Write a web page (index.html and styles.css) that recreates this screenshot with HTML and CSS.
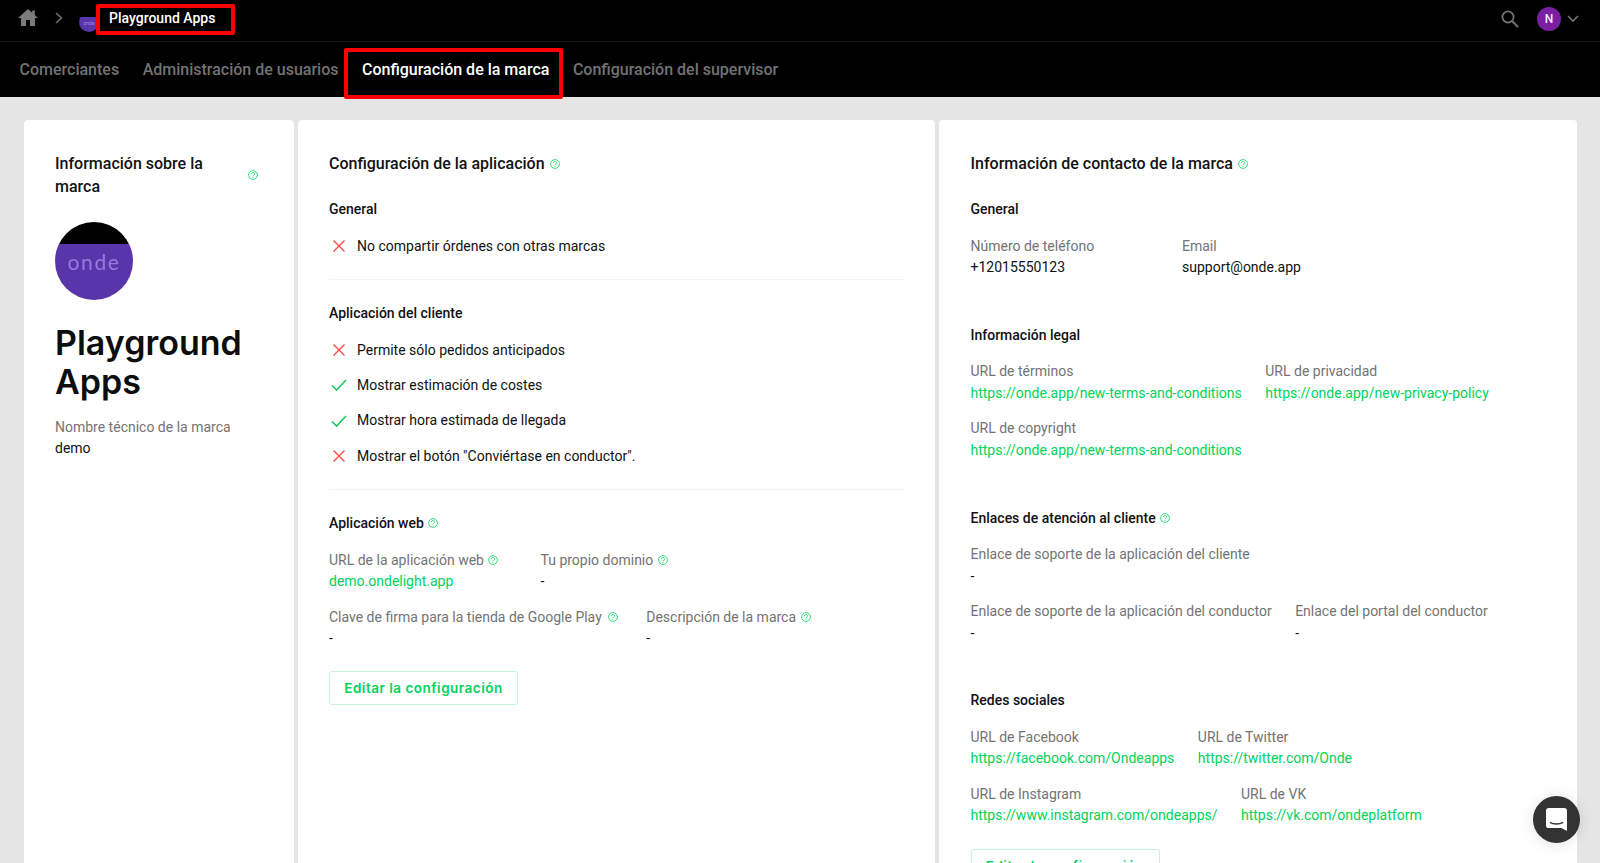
FILE: index.html
```html
<!DOCTYPE html>
<html lang="es">
<head>
<meta charset="utf-8">
<title>Configuración de la marca</title>
<link rel="stylesheet" href="styles.css">
</head>
<body>
<svg class="sprite" width="0" height="0" aria-hidden="true">
  <symbol id="help" viewBox="0 0 10 10"><circle cx="5" cy="5" r="4.4" fill="none" stroke="currentColor" stroke-width=".9"/><path d="M3.5 4a1.5 1.5 0 1 1 2.3 1.2c-.5.35-.8.55-.8 1.05" fill="none" stroke="currentColor" stroke-width=".9"/><circle cx="5" cy="7.5" r=".5" fill="currentColor"/></symbol>
  <symbol id="no" viewBox="0 0 14 14"><path d="M1.5 1.5l11 11M12.5 1.5l-11 11" fill="none" stroke="currentColor" stroke-width="1.3"/></symbol>
  <symbol id="yes" viewBox="0 0 16 14"><path d="M1 7.5l4.6 4.6L15 2" fill="none" stroke="currentColor" stroke-width="1.5"/></symbol>
</svg>
<header class="topbar">
  <div class="crumbs">
    <svg class="home" viewBox="0 0 20 17"><path d="M10 0L0 9h3v8h5v-6h4v6h5V9h3l-3.2-2.9V1.5h-2.6v2.2z" fill="currentColor"/></svg>
    <svg class="crumb-sep" viewBox="0 0 8 12"><path d="M1 1l5.5 5L1 11" fill="none" stroke="currentColor" stroke-width="1.5"/></svg>
    <div class="mini-logo"><span>onde</span></div>
    <span class="brand marked marked-brand">Playground Apps</span>
    <div class="top-actions">
      <svg class="search" viewBox="0 0 18 18"><circle cx="7" cy="7" r="5.6" fill="none" stroke="currentColor" stroke-width="1.8"/><path d="M11 11l6 6" stroke="currentColor" stroke-width="2"/></svg>
      <div class="avatar">N</div>
      <svg class="caret" viewBox="0 0 12 8"><path d="M1 1l5 5 5-5" fill="none" stroke="currentColor" stroke-width="1.6"/></svg>
    </div>
  </div>
  <nav class="tabs">
    <span>Comerciantes</span>
    <span>Administración de usuarios</span>
    <span class="active marked marked-tab">Configuración de la marca</span>
    <span>Configuración del supervisor</span>
  </nav>
</header>
<main class="cards">
  <section class="card">
    <div class="brand-heading">
      <h2>Información sobre la marca</h2>
      <svg class="help"><use href="#help"/></svg>
    </div>
    <div class="logo"><span>onde</span></div>
    <h1>Playground Apps</h1>
    <div class="label">Nombre técnico de la marca</div>
    <div class="value">demo</div>
  </section>

  <section class="card">
    <h2>Configuración de la aplicación <svg class="help"><use href="#help"/></svg></h2>
    <h3 class="first">General</h3>
    <ul class="checks">
      <li><svg class="mark no"><use href="#no"/></svg>No compartir órdenes con otras marcas</li>
    </ul>
    <hr>
    <h3>Aplicación del cliente</h3>
    <ul class="checks">
      <li><svg class="mark no"><use href="#no"/></svg>Permite sólo pedidos anticipados</li>
      <li><svg class="mark yes"><use href="#yes"/></svg>Mostrar estimación de costes</li>
      <li><svg class="mark yes"><use href="#yes"/></svg>Mostrar hora estimada de llegada</li>
      <li><svg class="mark no"><use href="#no"/></svg>Mostrar el botón "Conviértase en conductor".</li>
    </ul>
    <hr>
    <h3>Aplicación web <svg class="help"><use href="#help"/></svg></h3>
    <div class="fields">
      <div class="row">
        <div class="field"><div class="label">URL de la aplicación web <svg class="help"><use href="#help"/></svg></div><div class="value link">demo.ondelight.app</div></div>
        <div class="field"><div class="label">Tu propio dominio <svg class="help"><use href="#help"/></svg></div><div class="value">-</div></div>
      </div>
      <div class="row">
        <div class="field field-wide"><div class="label">Clave de firma para la tienda de Google Play <svg class="help"><use href="#help"/></svg></div><div class="value">-</div></div>
        <div class="field"><div class="label">Descripción de la marca <svg class="help"><use href="#help"/></svg></div><div class="value">-</div></div>
      </div>
    </div>
    <button class="edit">Editar la configuración</button>
  </section>

  <section class="card card-contact">
    <h2>Información de contacto de la marca <svg class="help"><use href="#help"/></svg></h2>
    <h3 class="first">General</h3>
    <div class="fields">
      <div class="row">
        <div class="field"><div class="label">Número de teléfono</div><div class="value">+12015550123</div></div>
        <div class="field"><div class="label">Email</div><div class="value">support@onde.app</div></div>
      </div>
    </div>
    <h3 class="group">Información legal</h3>
    <div class="fields">
      <div class="row">
        <div class="field"><div class="label">URL de términos</div><div class="value link">https://onde.app/new-terms-and-conditions</div></div>
        <div class="field"><div class="label">URL de privacidad</div><div class="value link">https://onde.app/new-privacy-policy</div></div>
      </div>
      <div class="row">
        <div class="field"><div class="label">URL de copyright</div><div class="value link">https://onde.app/new-terms-and-conditions</div></div>
      </div>
    </div>
    <h3 class="group">Enlaces de atención al cliente <svg class="help"><use href="#help"/></svg></h3>
    <div class="fields">
      <div class="row">
        <div class="field"><div class="label">Enlace de soporte de la aplicación del cliente</div><div class="value">-</div></div>
      </div>
      <div class="row">
        <div class="field"><div class="label">Enlace de soporte de la aplicación del conductor</div><div class="value">-</div></div>
        <div class="field"><div class="label">Enlace del portal del conductor</div><div class="value">-</div></div>
      </div>
    </div>
    <h3 class="group">Redes sociales</h3>
    <div class="fields">
      <div class="row">
        <div class="field"><div class="label">URL de Facebook</div><div class="value link">https://facebook.com/Ondeapps</div></div>
        <div class="field"><div class="label">URL de Twitter</div><div class="value link">https://twitter.com/Onde</div></div>
      </div>
      <div class="row">
        <div class="field"><div class="label">URL de Instagram</div><div class="value link">https://www.instagram.com/ondeapps/</div></div>
        <div class="field"><div class="label">URL de VK</div><div class="value link">https://vk.com/ondeplatform</div></div>
      </div>
    </div>
    <button class="edit">Editar la configuración</button>
  </section>
</main>
<button class="chat" aria-label="Chat">
  <svg viewBox="0 0 22 24"><path d="M3 0h16a3 3 0 0 1 3 3v21l-6-3H3a3 3 0 0 1-3-3V3a3 3 0 0 1 3-3z" fill="#fff"/><path d="M4 15c4 2.4 10 2.4 14 0" fill="none" stroke="#333" stroke-width="1.5"/></svg>
</button>
</body>
</html>
```

FILE: styles.css
```css
*, *::before, *::after { box-sizing: border-box; }
html, body { margin: 0; height: 863px; overflow: hidden; }
body { background: #e5e5e5; font-family: Roboto, "Liberation Sans", sans-serif; color: #111; font-size: 14px; }
.sprite { position: absolute; }

.topbar { background: #000; height: 97px; color: #737373; }
.crumbs { height: 42px; border-bottom: 1px solid #1a1a1a; display: flex; align-items: center; padding: 0 0 6px 18px; }
.home { width: 20px; height: 17px; color: #7b7b7b; margin-right: 17px; }
.crumb-sep { width: 8px; height: 12px; margin-right: 16px; color: #6f6f6f; }
.mini-logo { width: 20px; height: 20px; border-radius: 50%; background: linear-gradient(#000 25%, #5835a8 25%); overflow: hidden; margin: 8px 10px 0 0; display: flex; align-items: center; justify-content: center; padding-top: 2px; }
.mini-logo span { font: 5px/6px Lato, sans-serif; color: #a58bea; }
.brand { color: #fff; font-weight: 500; font-size: 14px; line-height: 20px; margin-top: 1px; }
.top-actions { margin-left: auto; display: flex; align-items: center; padding: 3px 21px 0 0; }
.search { width: 18px; height: 18px; margin-right: 18px; color: #737373; }
.avatar { width: 24px; height: 24px; border-radius: 50%; background: #7b1fa2; color: #eee; font-size: 12px; font-weight: 500; display: flex; align-items: center; justify-content: center; margin-right: 6px; }
.caret { width: 12px; height: 8px; color: #737373; }

.tabs { display: flex; gap: 23.5px; padding: 17px 0 0 19.5px; font-size: 16px; font-weight: 500; line-height: 22px; }
.active { color: #fff; }
.marked { position: relative; }
.marked::after { content: ""; position: absolute; border: 4px solid #f00; border-radius: 2px; pointer-events: none; }
.marked-brand::after { left: -13px; top: -4px; width: 139px; height: 31px; }
.marked-tab::after { left: -18px; top: -11px; width: 219px; height: 51px; }

.cards { display: grid; grid-template-columns: 270px 637px 638px; gap: 4px; padding: 23px 0 0 23.5px; height: 766px; }
.card { background: #fff; border-radius: 4px 4px 0 0; padding: 31.5px 31px 0 31.5px; height: 760px; }
.card:first-child { padding-right: 36px; }
.card-contact { padding-left: 32px; }

h2 { margin: 0; font-size: 16px; font-weight: 500; line-height: 24px; }
.brand-heading h2 { width: 170px; line-height: 23.5px; }
h3 { margin: 0 0 15.5px; font-size: 14px; font-weight: 500; line-height: 21px; }
h3.first { margin-top: 23.5px; }
h3.group { margin-top: 46.75px; }
hr { border: 0; border-top: 1px solid #f4f4f4; margin: 22.75px 0; }
.help { width: 10px; height: 10px; color: #1fd870; margin-left: 1px; vertical-align: 0; }

.brand-heading { display: flex; justify-content: space-between; align-items: center; }
.logo { width: 78px; height: 78px; margin-top: 23.5px; border-radius: 50%; background: linear-gradient(#000 28%, #5835a8 28%); display: flex; align-items: center; justify-content: center; }
.logo span { color: #9678e0; font: 400 21px/1 Lato, sans-serif; letter-spacing: 1.6px; }
h1 { margin: 22.5px 0 16px; font: 600 34px/39px Inter, sans-serif; color: #0d0d0d; }

.label { color: #737373; line-height: 21.5px; white-space: nowrap; }
.value { line-height: 21px; white-space: nowrap; }
.link { color: #00d35a; }

.checks { list-style: none; margin: 0; padding: 0; display: flex; flex-direction: column; gap: 14.4px; }
.checks li { display: flex; align-items: center; line-height: 21px; }
.mark { flex: none; margin-right: 10px; }
.no { width: 14px; height: 14px; color: #f4473c; margin-left: 3px; margin-right: 11px; }
.yes { width: 16px; height: 14px; color: #19c85f; margin-left: 2px; }

.fields { display: flex; flex-direction: column; gap: 14.5px; }
.row { display: flex; gap: 23.5px; }
.field { min-width: 188px; }
.field-wide { margin-right: 4.5px; }
.field-wide .help { margin-left: 3px; }

.edit { display: block; margin-top: 22px; width: 189px; height: 34px; background: #fff; border: 1px solid #c9f3da; border-radius: 3px; color: #00d35a; font: 600 13.5px Inter, sans-serif; letter-spacing: .5px; padding: 0; }
.card-contact .edit { margin-top: 23px; }

.chat { position: absolute; left: 1533px; top: 796px; width: 47px; height: 47px; border-radius: 50%; border: 0; background: #333; box-shadow: 0 1px 14px rgba(0,0,0,.12); display: flex; align-items: center; justify-content: center; padding: 0; }
.chat svg { width: 21px; height: 23px; }
```
